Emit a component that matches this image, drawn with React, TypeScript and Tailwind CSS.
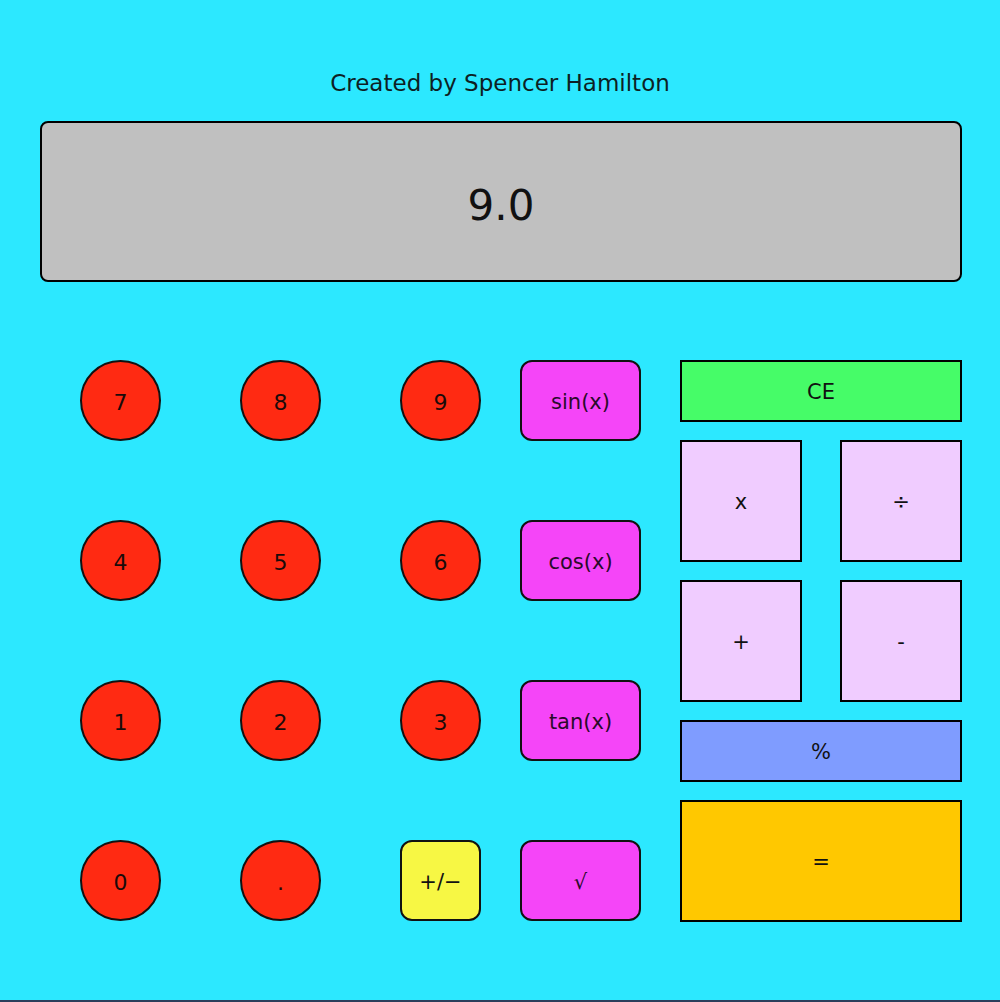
import React from "react";

const font = { fontFamily: '"DejaVu Sans", "Liberation Sans", sans-serif' };

function Circle({ label }: { label: string }) {
  return (
    <div className="w-[81px] h-[81px] rounded-full bg-[#ff2a12] border-2 border-[#111] flex items-center justify-center pt-[4px] text-[22px] text-[#1a0a0a]">
      {label}
    </div>
  );
}

function Pill({ label, yellow }: { label: string; yellow?: boolean }) {
  return (
    <div
      className={
        yellow
          ? "w-[81px] h-[81px] rounded-[12px] bg-[#f7f744] border-2 border-[#111] flex items-center justify-center pt-[4px] text-[21px] text-[#111]"
          : "w-[121px] h-[81px] rounded-[12px] bg-[#f545f8] border-2 border-[#111] flex items-center justify-center pt-[4px] text-[21px] text-[#2a0a2a]"
      }
    >
      {label}
    </div>
  );
}

export default function App() {
  const rows: [string, string, string, React.ReactNode][] = [
    ["7", "8", "9", <Pill label="sin(x)" />],
    ["4", "5", "6", <Pill label="cos(x)" />],
    ["1", "2", "3", <Pill label="tan(x)" />],
    ["0", ".", "", <Pill label="√" />],
  ];
  return (
    <div className="w-[1000px] h-[1002px] bg-[#2ce8ff] flex flex-col relative overflow-hidden" style={font}>
      <div className="pt-[69px] h-[121px] text-center text-[23px] leading-[28px] text-[#0d1f24]">
        Created by Spencer Hamilton
      </div>
      <div className="ml-[40px] w-[922px] h-[161px] rounded-[8px] border-2 border-black bg-[#c0c0c0] flex items-center justify-center pt-[8px] text-[42px] text-[#111]">
        9.0
      </div>
      <div className="mt-[78px] ml-[80px] flex">
        <div className="grid grid-cols-[160px_160px_120px_120px] gap-y-[79px] auto-rows-[81px]">
          {rows.map((r, i) => (
            <React.Fragment key={i}>
              <Circle label={r[0]} />
              <Circle label={r[1]} />
              {i === 3 ? <Pill label="+/−" yellow /> : <Circle label={r[2]} />}
              {r[3]}
            </React.Fragment>
          ))}
        </div>
        <div className="ml-[40px] w-[282px] flex flex-col gap-[18px] text-[21px] text-[#111]">
          <div className="h-[62px] bg-[#46fc68] border-2 border-black flex items-center justify-center pt-[3px]">CE</div>
          <div className="flex justify-between">
            <div className="w-[122px] h-[122px] bg-[#f0ccff] border-2 border-black flex items-center justify-center pt-[4px]">x</div>
            <div className="w-[122px] h-[122px] bg-[#f0ccff] border-2 border-black flex items-center justify-center pt-[4px]">÷</div>
          </div>
          <div className="flex justify-between">
            <div className="w-[122px] h-[122px] bg-[#f0ccff] border-2 border-black flex items-center justify-center pt-[4px]">+</div>
            <div className="w-[122px] h-[122px] bg-[#f0ccff] border-2 border-black flex items-center justify-center pt-[4px]">-</div>
          </div>
          <div className="h-[62px] bg-[#7f9cff] border-2 border-black flex items-center justify-center pt-[3px]">%</div>
          <div className="h-[122px] bg-[#ffc800] border-2 border-black flex items-center justify-center pt-[4px]">=</div>
        </div>
      </div>
      <div className="absolute left-0 bottom-0 w-full h-[2px] bg-[#2b3f5c]" />
    </div>
  );
}
